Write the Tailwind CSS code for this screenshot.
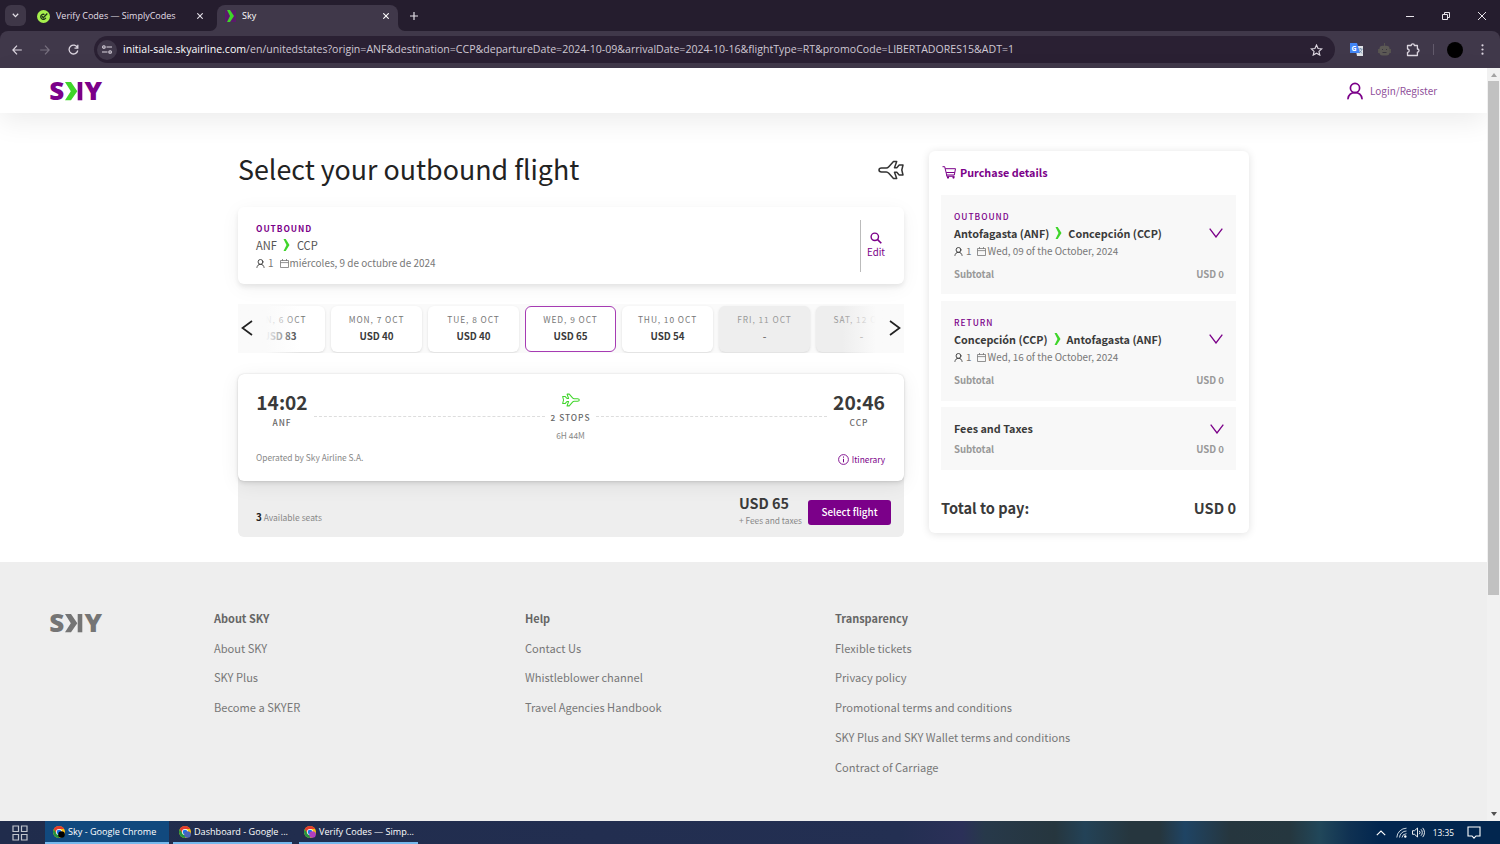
<!DOCTYPE html>
<html lang="en">
<head>
    <meta charset="UTF-8">
    <meta name="viewport" content="width=device-width, initial-scale=1.0">
    <title>Sky</title>
    <script src="https://cdn.jsdelivr.net/npm/@tailwindcss/browser@4"></script>
</head>
<body class="w-[1500px] h-[844px] overflow-hidden flex flex-col bg-white text-[#3a3a3a] font-['Noto_Sans_CJK_SC','Open_Sans',sans-serif]">

    <!-- Shared icons -->
    <svg class="hidden">
        <symbol id="arrow" viewBox="0 0 7 12"><path d="M.5 0h2.200L6.500 6 2.700 12H.5L3.500 6z" fill="#3fd52a"/></symbol>
        <symbol id="person" viewBox="0 0 16 17"><g fill="none" stroke="currentColor" stroke-width="1.7" stroke-linecap="round"><circle cx="8" cy="5.5" r="4.6"/><path d="M1 16.2c.6-4 3.300-6.100 7-6.100s6.400 2.100 7 6.100"/></g></symbol>
        <symbol id="calendar" viewBox="0 0 9 9"><path d="M.5 1.500h8v7h-8zM.5 3.600h8M2.500 0v2M6.500 0v2" fill="none" stroke="currentColor" stroke-width=".8"/></symbol>
        <symbol id="down" viewBox="0 0 14 10"><path d="M.7.700 7 9 13.300.700" fill="none" stroke="#7b0089" stroke-width="1.300"/></symbol>
        <symbol id="plane" viewBox="0 0 26 20"><path d="M1 10c0-1.400 1-1.900 2.500-1.900h4.800c1.200 0 1.800-.5 2.500-1.300L15.500 1.500h3.200l-2.200 6.300h2.300l2.400-2.800H25L23.800 10l1.200 5h-3.800l-2.400-2.800h-2.300l2.200 6.300h-3.200l-4.700-5.300c-.7-.8-1.300-1.300-2.500-1.300H3.500C2 11.900 1 11.400 1 10z" fill="none" stroke="currentColor" stroke-width="1.500" stroke-linejoin="round"/></symbol>
        <symbol id="chrome" viewBox="0 0 14 14">
            <circle cx="7" cy="7" r="6" fill="#fbc116"/>
            <path d="M1.800 4A6 6 0 0 1 12.200 4H7L4.400 8.500z" fill="#e33b2e"/>
            <path d="M1.800 4A6 6 0 0 0 7 13l2.600-4.500H4.400z" fill="#229342"/>
            <circle cx="7" cy="7" r="3" fill="#fff"/><circle cx="7" cy="7" r="2.300" fill="#1a73e8"/>
        </symbol>
    </svg>

    <!-- Tab strip -->
    <div class="h-[31px] shrink-0 bg-[#251d2e] flex items-end text-[#e3dfe6] font-['Open_Sans',sans-serif] text-[9px]">
        <div class="w-[21px] h-[21px] ml-[5px] mb-[5px] rounded-md bg-[#3f3748] flex items-center justify-center">
            <svg class="w-[7px] h-[5px]" viewBox="0 0 7 5"><path d="M.8.800 3.500 3.600 6.200.800" fill="none" stroke="#e3dfe6" stroke-width="1.300"/></svg>
        </div>
        <div class="w-[191px] h-[31px] flex items-center pl-[11px] pr-[14px] pt-px">
            <svg class="w-[13px] h-[13px]" viewBox="0 0 13 13"><circle cx="6.500" cy="6.500" r="6.500" fill="#a6f04d"/><path d="M7.500 4.500a2.600 2.600 0 1 0 1.300 3.200M5 6.200l1.300 1.500L10.300 3.500" fill="none" stroke="#20351a" stroke-width="1.300"/></svg>
            <span class="ml-[6px] flex-1 whitespace-nowrap">Verify Codes — SimplyCodes</span>
            <svg class="w-[6px] h-[6px]" viewBox="0 0 6 6"><path d="M.3.300l5.400 5.400M5.700.300.300 5.700" stroke="#e3dfe6" stroke-width="1.100"/></svg>
        </div>
        <div class="relative w-[181px] h-[26px] flex items-center rounded-t-lg bg-[#40384a] pl-[8px] pr-[9px] pb-[4px]">
            <svg class="absolute -left-[7px] bottom-0 w-[7px] h-[7px]" viewBox="0 0 7 7"><path d="M7 0v7H0a7 7 0 0 0 7-7z" fill="#40384a"/></svg>
            <svg class="absolute -right-[7px] bottom-0 w-[7px] h-[7px]" viewBox="0 0 7 7"><path d="M0 0v7h7a7 7 0 0 1-7-7z" fill="#40384a"/></svg>
            <svg class="w-[11px] h-[12px]" viewBox="0 0 11 12"><path d="M0 0h11v12H0z" fill="#5b1a6b"/><path d="M2 0h3l4 6-4 6H2l3-6z" fill="#3fd52a"/></svg>
            <span class="ml-[6px] flex-1 text-white">Sky</span>
            <svg class="w-[6px] h-[6px]" viewBox="0 0 6 6"><path d="M.3.300l5.400 5.400M5.700.300.300 5.700" stroke="#fff" stroke-width="1.100"/></svg>
        </div>
        <svg class="w-[8px] h-[8px] ml-[12px] mb-[11px]" viewBox="0 0 8 8"><path d="M4 0v8M0 4h8" stroke="#e3dfe6" stroke-width="1.200"/></svg>
        <div class="flex-1"></div>
        <div class="h-[31px] flex items-center gap-[28px] pr-[14px]">
            <svg class="w-[8px] h-[8px]" viewBox="0 0 8 8"><path d="M0 4.500h8" stroke="#e8e4ea"/></svg>
            <svg class="w-[8px] h-[8px]" viewBox="0 0 8 8"><path d="M.5 2.500h5v5h-5zM2.500 2.500v-2h5v5h-2" fill="none" stroke="#e8e4ea"/></svg>
            <svg class="w-[8px] h-[8px]" viewBox="0 0 8 8"><path d="M0 0l8 8M8 0 0 8" stroke="#e8e4ea"/></svg>
        </div>
    </div>

    <!-- Address bar -->
    <div class="h-[37px] shrink-0 bg-[#251d2e]">
    <div class="h-[37px] bg-[#40384a] rounded-t-lg flex items-center pl-[12px] pr-[14px] text-[#cfc9d4]">
        <svg class="w-[10px] h-[10px]" viewBox="0 0 10 10"><path d="M9.800 5H1M5 .700.900 5 5 9.300" fill="none" stroke="#dcd6e0" stroke-width="1.200"/></svg>
        <svg class="w-[10px] h-[10px] ml-[18px]" viewBox="0 0 10 10"><path d="M.2 5H9M5 .700 9.100 5 5 9.300" fill="none" stroke="#77707f" stroke-width="1.200"/></svg>
        <svg class="w-[11px] h-[11px] ml-[18px]" viewBox="0 0 11 11"><path d="M9.500 3.700A4.400 4.400 0 1 0 9.800 6.500M9.800.800v3.300H6.500" fill="none" stroke="#dcd6e0" stroke-width="1.300"/></svg>
        <div class="w-[1241px] h-[27px] ml-[15px] rounded-full bg-[#2a2033] flex items-center pl-[3px] pr-[12px]">
            <div class="w-[20px] h-[20px] rounded-full bg-[#40384a] flex items-center justify-center">
                <svg class="w-[10px] h-[9px]" viewBox="0 0 10 9"><g fill="none" stroke="#dcd6e0" stroke-width="1.100"><circle cx="1.900" cy="2" r="1.300"/><path d="M4.500 2H10M0 7h5.500"/><circle cx="8.100" cy="7" r="1.300"/></g></svg>
            </div>
            <p class="ml-[6px] flex-1 whitespace-nowrap font-['Open_Sans',sans-serif] text-[10.58px] text-[#cfc8d3]"><span class="text-white">initial-sale.skyairline.com</span>/en/unitedstates?origin=ANF&amp;destination=CCP&amp;departureDate=2024-10-09&amp;arrivalDate=2024-10-16&amp;flightType=RT&amp;promoCode=LIBERTADORES15&amp;ADT=1</p>
            <svg class="w-[13px] h-[12px]" viewBox="0 0 24 23"><path d="M12 2l3 6.700 7 .700-5.300 4.800 1.600 7-6.300-3.700-6.300 3.700 1.600-7L2 9.400l7-.7z" fill="none" stroke="#dcd6e0" stroke-width="2.200"/></svg>
        </div>
        <svg class="w-[13px] h-[13px] ml-[15px]" viewBox="0 0 13 13"><path d="M5 3h8v10H7z" fill="#dfe3e8"/><path d="M0 0h7l3 10H0z" fill="#4285f4"/><text x="1.500" y="7.500" font-size="7" font-weight="700" fill="#fff" font-family="Open Sans">G</text><path d="M8.500 6h4M10.500 5v1M12 6c-.5 2-1.500 3-3 4M9.500 7.500l2.500 3" stroke="#5f7d9c" stroke-width=".7" fill="none"/></svg>
        <svg class="w-[13px] h-[13px] ml-[15px]" viewBox="0 0 13 13"><path d="M6 0h1v3H6zM0 6h13v4H0z" fill="#55524f"/><rect x="1.500" y="2.800" width="10" height="9.700" rx="3" fill="#5c5955"/><path d="M4 6.500h1M8 6.500h1M4.500 9.500h4" stroke="#3a3640"/></svg>
        <svg class="w-[14px] h-[14px] ml-[15px]" viewBox="0 0 14 14"><path d="M1.500 2.500h3.700c0-2.200 3.200-2.200 3.200 0h3v3.500c2.100 0 2.100 3.200 0 3.200v3.300H1.500V9.300c2.200 0 2.200-3.300 0-3.300z" fill="none" stroke="#dcd6e0" stroke-width="1.300" stroke-linejoin="round"/></svg>
        <div class="w-px h-[11px] ml-[13px] bg-[#625a6b]"></div>
        <div class="w-[16px] h-[16px] ml-[13px] rounded-full bg-black"></div>
        <svg class="w-[3px] h-[11px] ml-auto mr-[2px]" viewBox="0 0 3 11"><g fill="#dcd6e0"><circle cx="1.500" cy="1.300" r="1.100"/><circle cx="1.500" cy="5.500" r="1.100"/><circle cx="1.500" cy="9.700" r="1.100"/></g></svg>
    </div>
    </div>

    <!-- Page -->
    <div class="h-[753px] shrink-0 flex">
        <div class="w-[1487px] flex flex-col">
            <header class="h-[45px] shrink-0 bg-white shadow-[0_8px_28px_rgba(0,0,0,0.08)] flex items-center justify-between pl-[49px] pr-[50px]">
                <svg class="w-[54px] h-[20px] overflow-visible" viewBox="0 0 54 20" font-family="Open Sans" font-weight="800" font-size="25.500">
                    <text x="0.300" y="19" textLength="15" lengthAdjust="spacingAndGlyphs" fill="#7b0089">S</text>
                    <path d="M16 1h6l6.300 9.200L22 19.300h-6l5.800-9.100z" fill="#3fd52a"/>
                    <path d="M28.700 1h4.600v18.300h-4.600z" fill="#7b0089"/>
                    <text x="35.600" y="19.300" textLength="17.600" lengthAdjust="spacingAndGlyphs" fill="#7b0089">Y</text>
                </svg>
                <a href="#" class="flex items-center text-[#8f4f9a] text-[9.95px] leading-4">
                    <svg class="w-[16px] h-[18px] mr-[7px] text-[#7b0089]"><use href="#person"/></svg>Login/Register
                </a>
            </header>

            <main class="h-[449px] shrink-0 flex items-start gap-[25px] pt-[38px] pl-[238px]">
                <div class="w-[666px]">
                    <div class="h-[38px] flex items-center justify-between">
                        <h1 class="text-[26.8px] leading-[38px] -mt-[2px] text-[#222] whitespace-nowrap">Select your outbound flight</h1>
                        <svg class="w-[26px] h-[20px] text-[#333]"><use href="#plane"/></svg>
                    </div>

                    <!-- Search summary -->
                    <section class="mt-[18px] h-[77px] rounded-md bg-white shadow-[0_3px_5px_rgba(0,0,0,0.08),0_4px_20px_rgba(0,0,0,0.05)] flex items-center justify-between pl-[18px] pr-[19px]">
                        <div class="pt-px">
                            <p class="text-[8.4px] leading-4 font-bold tracking-[0.95px] text-[#7b0089]">OUTBOUND</p>
                            <p class="text-[11.1px] leading-[18px] text-[#555] flex items-center">ANF<svg class="w-[7px] h-[12px] ml-[6px] mr-[7px]"><use href="#arrow"/></svg>CCP</p>
                            <p class="text-[9.95px] leading-[18px] text-[#777] flex items-center"><svg class="w-[9px] h-[9px] mr-[3px] text-[#333]" viewBox="0 0 16 17"><use href="#person"/></svg>1<svg class="w-[9px] h-[9px] ml-[6px] mr-px"><use href="#calendar"/></svg>miércoles, 9 de octubre de 2024</p>
                        </div>
                        <a href="#" class="h-[52px] border-l border-[#bbb] pl-[6px] flex flex-col items-center justify-center text-[#7b0089] text-[9.7px] leading-[14px]">
                            <svg class="w-[12px] h-[12px] mb-px" viewBox="0 0 12 12"><circle cx="4.800" cy="4.800" r="3.700" fill="none" stroke="currentColor" stroke-width="1.400"/><path d="M7.600 7.600l3.700 3.700" stroke="currentColor" stroke-width="1.600"/></svg>
                            Edit
                        </a>
                    </section>

                    <!-- Date picker -->
                    <section class="relative mt-[20px] h-[49px] bg-[#fafafa] overflow-hidden">
                        <div class="flex gap-[6px] -ml-[4px] pt-[2px] w-[760px] text-center text-[8.4px] leading-[14px] tracking-[0.95px] text-[#777]">
                            <div class="w-[91px] h-[46px] pt-[6px] rounded-md bg-white shadow-sm/10"><p>SUN, 6 OCT</p><p class="mt-[3px] text-[9.8px] tracking-normal font-bold text-[#3a3a3a]">USD 83</p></div>
                            <div class="w-[91px] h-[46px] pt-[6px] rounded-md bg-white shadow-sm/10"><p>MON, 7 OCT</p><p class="mt-[3px] text-[9.8px] tracking-normal font-bold text-[#3a3a3a]">USD 40</p></div>
                            <div class="w-[91px] h-[46px] pt-[6px] rounded-md bg-white shadow-sm/10"><p>TUE, 8 OCT</p><p class="mt-[3px] text-[9.8px] tracking-normal font-bold text-[#3a3a3a]">USD 40</p></div>
                            <div class="w-[91px] h-[46px] pt-[5px] rounded-md bg-white border border-[#a63bb3]"><p>WED, 9 OCT</p><p class="mt-[3px] text-[9.8px] tracking-normal font-bold text-[#3a3a3a]">USD 65</p></div>
                            <div class="w-[91px] h-[46px] pt-[6px] rounded-md bg-white shadow-sm/10"><p>THU, 10 OCT</p><p class="mt-[3px] text-[9.8px] tracking-normal font-bold text-[#3a3a3a]">USD 54</p></div>
                            <div class="w-[91px] h-[46px] pt-[6px] rounded-md bg-[#eee] shadow-sm/10 text-[#999]"><p>FRI, 11 OCT</p><p class="mt-[3px] text-[9.8px] tracking-normal font-bold text-[#777]">-</p></div>
                            <div class="w-[91px] h-[46px] pt-[6px] rounded-md bg-[#eee] shadow-sm/10 text-[#999]"><p>SAT, 12 OCT</p><p class="mt-[3px] text-[9.8px] tracking-normal font-bold text-[#777]">-</p></div>
                        </div>
                        <div class="absolute left-0 top-0 w-[62px] h-full bg-linear-to-r from-[#fafafa] from-45% to-[#fafafa]/0 flex items-center pl-[3px]">
                            <svg class="w-[12px] h-[16px] -mt-px" viewBox="0 0 12 16"><path d="M11 1 1.500 8l9.500 7" fill="none" stroke="#222" stroke-width="1.700"/></svg>
                        </div>
                        <div class="absolute right-0 top-0 w-[62px] h-full bg-linear-to-l from-[#fafafa] from-45% to-[#fafafa]/0 flex items-center justify-end pr-[3px]">
                            <svg class="w-[12px] h-[16px] -mt-px" viewBox="0 0 12 16"><path d="M1 1l9.500 7L1 15" fill="none" stroke="#222" stroke-width="1.700"/></svg>
                        </div>
                    </section>

                    <!-- Flight -->
                    <section class="mt-[21px] rounded-md bg-[#eee]">
                        <div class="h-[107px] rounded-md bg-white shadow-[0_0_2px_rgba(0,0,0,0.12),0_2px_4px_rgba(0,0,0,0.1),0_4px_20px_rgba(0,0,0,0.07)] pl-[18px] pr-[19px] pt-[17px] flex flex-col">
                            <div class="flex h-[55px] items-start">
                                <div class="text-center w-[52px]">
                                    <p class="text-[19.1px] leading-[22px] font-bold">14:02</p>
                                    <p class="text-[8.4px] leading-[18px] font-medium tracking-[1px] text-[#666]">ANF</p>
                                </div>
                                <div class="flex-1 mt-[25px] ml-[6px] mr-[6px] border-t border-dashed border-[#ddd]"></div>
                                <div class="flex flex-col items-center text-[8.4px] leading-[18px] tracking-[0.95px] text-[#666]">
                                    <svg class="w-[18px] h-[14px] mt-[2px] rotate-180 text-[#3fd52a]" viewBox="0 0 26 20"><use href="#plane"/></svg>
                                    <p class="leading-[20px] font-medium">2 STOPS</p>
                                    <p class="leading-[16px] tracking-normal text-[#888]">6H 44M</p>
                                </div>
                                <div class="flex-1 mt-[25px] ml-[6px] mr-[6px] border-t border-dashed border-[#ddd]"></div>
                                <div class="text-center w-[52px]">
                                    <p class="text-[19.3px] leading-[22px] font-bold">20:46</p>
                                    <p class="text-[8.4px] leading-[18px] font-medium tracking-[1px] text-[#666]">CCP</p>
                                </div>
                            </div>
                            <div class="flex justify-between text-[8.4px] leading-4 text-[#888]">
                                <p class="mt-[3px]">Operated by Sky Airline S.A.</p>
                                <a href="#" class="mt-[5px] flex items-center text-[#7b0089]"><svg class="w-[11px] h-[11px] mr-[3px]" viewBox="0 0 11 11"><circle cx="5.500" cy="5.500" r="4.900" fill="none" stroke="currentColor" stroke-width=".9"/><path d="M5.500 2.500v1.200M5.500 4.800v3.500" stroke="currentColor"/></svg>Itinerary</a>
                            </div>
                        </div>
                        <div class="h-[56px] flex justify-between pl-[18px] pr-[13px]">
                            <p class="mt-[28px] text-[8.5px] leading-4 text-[#888]"><span class="text-[9.8px] font-bold text-[#222]">3</span> Available seats</p>
                            <div class="flex">
                                <div class="mr-[6px] pt-[12px]">
                                    <p class="text-[14.4px] leading-[20px] font-bold">USD 65</p>
                                    <p class="text-[8.35px] leading-[14px] text-[#888]">+ Fees and taxes</p>
                                </div>
                                <button class="w-[83px] h-[25px] mt-[19px] rounded-[3px] bg-[#7b0089] text-white text-[9.9px] leading-[25px] font-medium">Select flight</button>
                            </div>
                        </div>
                    </section>
                </div>

                <!-- Purchase details -->
                <aside class="w-[320px] h-[382px] rounded-md bg-white shadow-[0_1px_8px_rgba(0,0,0,0.12)] px-[12px] pt-[12px]">
                    <h2 class="h-[19px] flex items-center text-[10.8px] font-bold text-[#7b0089]">
                        <svg class="w-[15px] h-[13px] ml-px mr-[3px]" viewBox="0 0 15 13"><path d="M.5.700h2.200l2 8.300h7.600l1.200-6.300H3.200M4.200 6.500h8.600M4.700 9v1.300h7.900" fill="none" stroke="currentColor"/><circle cx="6" cy="11.600" r="1.100" fill="currentColor"/><circle cx="11.500" cy="11.600" r="1.100" fill="currentColor"/></svg>Purchase details
                    </h2>
                    <div class="mt-[13px] w-[295px] h-[99px] bg-[#f8f8f8] pl-[13px] pr-[12px] pt-[13px]">
                        <p class="text-[8.4px] leading-4 font-medium tracking-[1px] text-[#7b0089]">OUTBOUND</p>
                        <div class="flex items-center justify-between"><p class="text-[10.8px] leading-[18px] font-bold flex items-center">Antofagasta (ANF)<svg class="w-[7px] h-[12px] mx-[6px]"><use href="#arrow"/></svg>Concepción (CCP)</p><svg class="w-[14px] h-[10px] mr-px"><use href="#down"/></svg></div>
                        <p class="text-[9.9px] leading-[18px] text-[#777] flex items-center"><svg class="w-[9px] h-[9px] mr-[3px] text-[#333]" viewBox="0 0 16 17"><use href="#person"/></svg>1<svg class="w-[9px] h-[9px] ml-[6px] mr-px"><use href="#calendar"/></svg>Wed, 09 of the October, 2024</p>
                        <p class="mt-[5px] flex justify-between text-[9.6px] leading-[18px] font-bold text-[#999]"><span>Subtotal</span><span>USD 0</span></p>
                    </div>
                    <div class="mt-[7px] w-[295px] h-[100px] bg-[#f8f8f8] pl-[13px] pr-[12px] pt-[13px]">
                        <p class="text-[8.4px] leading-4 font-medium tracking-[1px] text-[#7b0089]">RETURN</p>
                        <div class="flex items-center justify-between"><p class="text-[10.8px] leading-[18px] font-bold flex items-center">Concepción (CCP)<svg class="w-[7px] h-[12px] mx-[6px]"><use href="#arrow"/></svg>Antofagasta (ANF)</p><svg class="w-[14px] h-[10px] mr-px"><use href="#down"/></svg></div>
                        <p class="text-[9.9px] leading-[18px] text-[#777] flex items-center"><svg class="w-[9px] h-[9px] mr-[3px] text-[#333]" viewBox="0 0 16 17"><use href="#person"/></svg>1<svg class="w-[9px] h-[9px] ml-[6px] mr-px"><use href="#calendar"/></svg>Wed, 16 of the October, 2024</p>
                        <p class="mt-[5px] flex justify-between text-[9.6px] leading-[18px] font-bold text-[#999]"><span>Subtotal</span><span>USD 0</span></p>
                    </div>
                    <div class="mt-[6px] w-[295px] h-[63px] bg-[#f8f8f8] pl-[13px] pr-[12px] pt-[12px]">
                        <div class="flex items-center justify-between"><p class="text-[10.8px] leading-[18px] font-bold pb-[2px]">Fees and Taxes</p><svg class="w-[14px] h-[10px]"><use href="#down"/></svg></div>
                        <p class="flex justify-between text-[9.6px] leading-[20px] font-bold text-[#999]"><span>Subtotal</span><span>USD 0</span></p>
                    </div>
                    <p class="mt-[28px] w-[295px] flex justify-between text-[14.6px] leading-[20px] font-bold"><span>Total to pay:</span><span>USD 0</span></p>
                </aside>
            </main>

            <footer class="relative flex-1 bg-[#eee] flex pl-[49px] pt-[42px] text-[11.1px] leading-[29.7px] text-[#777]">
                <svg class="w-[54px] h-[20px] mt-[9px] mr-[111px] overflow-visible" viewBox="0 0 54 20" font-family="Open Sans" font-weight="800" font-size="25.500" fill="#757575">
                    <text x="0.300" y="19" textLength="15" lengthAdjust="spacingAndGlyphs">S</text>
                    <path d="M16 1h6l6.300 9.200L22 19.300h-6l5.800-9.100z"/>
                    <path d="M28.700 1h4.600v18.300h-4.600z"/>
                    <text x="35.600" y="19.300" textLength="17.600" lengthAdjust="spacingAndGlyphs">Y</text>
                </svg>
                <ul class="w-[311px]">
                    <li class="font-bold text-[10.95px] text-[#666]">About SKY</li>
                    <li>About SKY</li>
                    <li>SKY Plus</li>
                    <li>Become a SKYER</li>
                </ul>
                <ul class="w-[310px]">
                    <li class="font-bold text-[10.95px] text-[#666]">Help</li>
                    <li>Contact Us</li>
                    <li>Whistleblower channel</li>
                    <li>Travel Agencies Handbook</li>
                </ul>
                <ul>
                    <li class="font-bold text-[10.95px] text-[#666]">Transparency</li>
                    <li>Flexible tickets</li>
                    <li>Privacy policy</li>
                    <li>Promotional terms and conditions</li>
                    <li>SKY Plus and SKY Wallet terms and conditions</li>
                    <li>Contract of Carriage</li>
                </ul>
            </footer>
        </div>

        <!-- Scrollbar -->
        <div class="w-[13px] bg-[#f1f1f1] flex flex-col items-center">
            <svg class="w-[6px] h-[4px] mt-[5px]" viewBox="0 0 6 4"><path d="M0 4h6L3 0z" fill="#a3a3a3"/></svg>
            <div class="w-[11px] h-[514px] mt-[4px] bg-[#c1c1c1]"></div>
            <svg class="w-[6px] h-[4px] mt-auto mb-[5px]" viewBox="0 0 6 4"><path d="M0 0h6L3 4z" fill="#505050"/></svg>
        </div>
    </div>

    <!-- Taskbar -->
    <div class="h-[23px] shrink-0 flex text-white font-['Open_Sans',sans-serif] text-[9.1px] leading-[21px] bg-[linear-gradient(90deg,#202c4c_0,#232f52_900px,#2b3058_962px,#27394a_985px,#26363e_1055px,#234257_1085px,#26363e_1130px,#26363e_1160px,#1f4464_1185px,#26363e_1230px,#25373f_1290px,#21475a_1320px,#0f3152_1350px,#02264f_1380px,#02264f_1500px)]">
        <svg class="w-[16px] h-[16px] ml-[12px] mt-[4px]" viewBox="0 0 16 16"><path d="M1 1h5.500v5.500H1zM9.500 1H15v5.500H9.500zM1 9.500h5.500V15H1zM9.500 9.500H15V15H9.500z" fill="none" stroke="#c0c4cc" stroke-width="1.200"/></svg>
        <div class="w-[124px] ml-[17px] flex bg-[#11497e] border-b-2 border-[#76b9ed] pl-[7px]">
            <svg class="w-[14px] h-[14px] mt-[4px] mr-[2px]" viewBox="0 0 14 14"><use href="#chrome"/><circle cx="9.500" cy="9.500" r="3.300"/></svg>Sky - Google Chrome
        </div>
        <div class="w-[119px] ml-[4px] flex border-b-2 border-[#76b9ed] pl-[5px] whitespace-nowrap">
            <svg class="w-[14px] h-[14px] mt-[4px] mr-[2px]" viewBox="0 0 14 14"><use href="#chrome"/><circle cx="9.500" cy="9.500" r="3.300" fill="#4a62b8"/></svg>Dashboard - Google ...
        </div>
        <div class="w-[119px] ml-[7px] flex border-b-2 border-[#76b9ed] pl-[4px] whitespace-nowrap">
            <svg class="w-[14px] h-[14px] mt-[4px] mr-[2px]" viewBox="0 0 14 14"><use href="#chrome"/><circle cx="9.500" cy="9.500" r="3.300" fill="#b03fc0"/></svg>Verify Codes — Simp...
        </div>
        <div class="ml-auto flex items-center pr-[19px]">
            <svg class="w-[10px] h-[6px] mr-[10px]" viewBox="0 0 10 6"><path d="M.8 5.200 5 1l4.200 4.200" fill="none" stroke="#fff" stroke-width="1.100"/></svg>
            <svg class="w-[11px] h-[11px] mr-[5px]" viewBox="0 0 11 11"><g fill="none" stroke="#dfe6ee" stroke-width=".9"><path d="M.8 10.500A9.800 9.800 0 0 1 10.500 1.200M3.500 10.500a7 7 0 0 1 7-6.500M6 10.500a4.500 4.500 0 0 1 4.500-3.800"/></g><circle cx="9.300" cy="9.500" r="1.200" fill="#fff"/></svg>
            <svg class="w-[13px] h-[11px] mr-[8px]" viewBox="0 0 13 11"><g fill="none" stroke="#fff" stroke-width=".9"><path d="M.5 3.700h2L5.500 1v9L2.500 7.300h-2zM7.300 3.800a2.500 2.500 0 0 1 0 3.400M9 2.300a4.600 4.600 0 0 1 0 6.400M10.700.900a6.800 6.800 0 0 1 0 9.200"/></g></svg>
            <span class="text-[8.3px] mr-[13px]">13:35</span>
            <svg class="w-[14px] h-[13px]" viewBox="0 0 14 13"><path d="M1 1h12v9H9l-2 2.200L5 10H1z" fill="none" stroke="#fff" stroke-width="1.100"/></svg>
        </div>
    </div>
</body>
</html>
